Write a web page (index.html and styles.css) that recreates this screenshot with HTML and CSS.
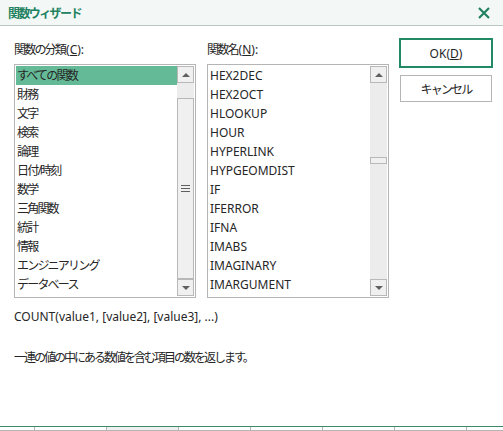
FILE: index.html
```html
<!DOCTYPE html>
<html lang="ja">
<head>
<meta charset="utf-8">
<title>関数ウィザード</title>
<link rel="stylesheet" href="styles.css">
</head>
<body>
<div class="dialog">
  <div class="titlebar">
    <span class="title">関数ウィザード</span>
    <svg class="close" width="12" height="12" viewBox="0 0 12 12"><path d="M1 1 L11 11 M11 1 L1 11" stroke="#218160" stroke-width="2.2" fill="none"/></svg>
  </div>
  <div class="body">
    <div class="main">
      <div class="col">
        <div class="label"><span class="ja">関数の分類</span>(<u>C</u>):</div>
        <div class="listbox">
          <ul class="items ja">
            <li class="sel">すべての関数</li>
            <li>財務</li>
            <li>文字</li>
            <li>検索</li>
            <li>論理</li>
            <li>日付/時刻</li>
            <li>数学</li>
            <li>三角関数</li>
            <li>統計</li>
            <li>情報</li>
            <li>エンジニアリング</li>
            <li>データベース</li>
          </ul>
          <div class="sb">
            <div class="sbbtn"><span class="up"></span></div>
            <div class="track">
              <div class="gap16"></div>
              <div class="thumb big"><span class="grip"></span></div>
            </div>
            <div class="sbbtn"><span class="down"></span></div>
          </div>
        </div>
      </div>
      <div class="col">
        <div class="label"><span class="ja">関数名</span>(<u>N</u>):</div>
        <div class="listbox">
          <ul class="items">
            <li>HEX2DEC</li>
            <li>HEX2OCT</li>
            <li>HLOOKUP</li>
            <li>HOUR</li>
            <li>HYPERLINK</li>
            <li>HYPGEOMDIST</li>
            <li>IF</li>
            <li>IFERROR</li>
            <li>IFNA</li>
            <li>IMABS</li>
            <li>IMAGINARY</li>
            <li>IMARGUMENT</li>
          </ul>
          <div class="sb">
            <div class="sbbtn"><span class="up"></span></div>
            <div class="track">
              <div class="gap75"></div>
              <div class="thumb small"></div>
            </div>
            <div class="sbbtn"><span class="down"></span></div>
          </div>
        </div>
      </div>
      <div class="buttons">
        <button class="btn ok">OK(<u>D</u>)</button>
        <button class="btn cancel ja">キャンセル</button>
      </div>
    </div>
    <div class="syntax">COUNT(value1, [value2], [value3], ...)</div>
    <div class="desc ja">一連の値の中にある数値を含む項目の数を返します。</div>
  </div>
  <div class="sheet">
    <div class="c c1"></div>
    <div class="c"></div>
    <div class="c shade"></div>
    <div class="c"></div>
    <div class="c"></div>
    <div class="c"></div>
    <div class="c"></div>
    <div class="c last"></div>
  </div>
</div>
</body>
</html>
```

FILE: styles.css
```css
html, body {
  margin: 0;
  padding: 0;
  background: #ffffff;
}
body {
  font-family: "Noto Sans", "Noto Sans CJK JP", sans-serif;
  font-size: 12px;
  color: #262626;
  width: 503px;
  height: 431px;
  overflow: hidden;
}
.ja {
  letter-spacing: -1.8px;
}
.dialog {
  display: flex;
  flex-direction: column;
  height: 431px;
}
.titlebar {
  height: 26px;
  box-sizing: border-box;
  background: #f3f8f6;
  border-bottom: 1px solid #b9c9bf;
  display: flex;
  align-items: center;
  justify-content: space-between;
  padding: 0 13px 0 8px;
}
.title {
  color: #218160;
  font-weight: bold;
  font-size: 12px;
  letter-spacing: -1.6px;
  font-family: "Noto Sans CJK JP", sans-serif;
}
.close {
  display: block;
}
.body {
  flex: 1;
  padding: 14px 0 0 14px;
}
.main {
  display: flex;
}
.col {
  display: flex;
  flex-direction: column;
  margin-right: 11px;
}
.label {
  height: 16px;
  line-height: 16px;
  margin: 2px 0 6px 0;
}
.label .ja {
  margin-right: 1px;
}
u {
  text-decoration: underline;
  text-underline-offset: 1px;
}
.listbox {
  width: 182px;
  height: 234px;
  box-sizing: border-box;
  border: 1px solid #b5b5b5;
  padding: 1px;
  display: flex;
}
.items {
  list-style: none;
  margin: 0;
  padding: 0;
  flex: 1;
}
.items li {
  height: 19px;
  line-height: 19px;
  padding-left: 1px;
  white-space: nowrap;
}
.items li.sel {
  background: #64b996;
  color: #262626;
}
.sb {
  width: 17px;
  display: flex;
  flex-direction: column;
  background: #ececec;
}
.sbbtn {
  height: 17px;
  box-sizing: border-box;
  border: 1px solid #b8b8b8;
  background: #f0f0f0;
  display: flex;
  align-items: center;
  justify-content: center;
}
.up {
  width: 0;
  height: 0;
  border-left: 4px solid transparent;
  border-right: 4px solid transparent;
  border-bottom: 4px solid #606060;
}
.down {
  width: 0;
  height: 0;
  border-left: 4px solid transparent;
  border-right: 4px solid transparent;
  border-top: 4px solid #606060;
}
.track {
  flex: 1;
  display: flex;
  flex-direction: column;
}
.gap16 {
  height: 15px;
}
.gap75 {
  height: 74px;
}
.thumb {
  box-sizing: border-box;
  border: 1px solid #b8b8b8;
  background: #f0f0f0;
}
.thumb.big {
  flex: 1;
  display: flex;
  align-items: center;
  justify-content: center;
}
.thumb.small {
  height: 7px;
}
.grip {
  width: 9px;
  height: 7px;
  box-sizing: border-box;
  border-top: 1px solid #606060;
  border-bottom: 1px solid #606060;
  background: linear-gradient(#606060, #606060) center / 100% 1px no-repeat;
}
.buttons {
  display: flex;
  flex-direction: column;
  align-items: flex-start;
  margin-top: -2px;
}
.btn {
  font-family: "Noto Sans", "Noto Sans CJK JP", sans-serif;
  font-size: 12px;
  color: #262626;
  background: #ffffff;
  padding: 0;
  margin: 0;
  box-sizing: border-box;
}
.ok {
  width: 94px;
  height: 30px;
  border: 2px solid #218a64;
  margin-left: -1px;
}
.cancel {
  width: 92px;
  height: 27px;
  border: 1px solid #b5b5b5;
  margin-top: 7px;
}
.syntax {
  margin-top: 11px;
  height: 16px;
  line-height: 16px;
}
.desc {
  margin-top: 25px;
  height: 16px;
  line-height: 16px;
  letter-spacing: -2px;
}
.sheet {
  height: 4px;
  border-top: 1px solid #3c8a6a;
  display: flex;
}
.c {
  width: 72px;
  box-sizing: border-box;
  border-left: 1px solid #b5b5b5;
  border-bottom: 1px solid #b5b5b5;
}
.c1 {
  width: 34px;
  border-left: none;
}
.shade {
  background: #f0f0f0;
}
.last {
  flex: 1;
}
```
